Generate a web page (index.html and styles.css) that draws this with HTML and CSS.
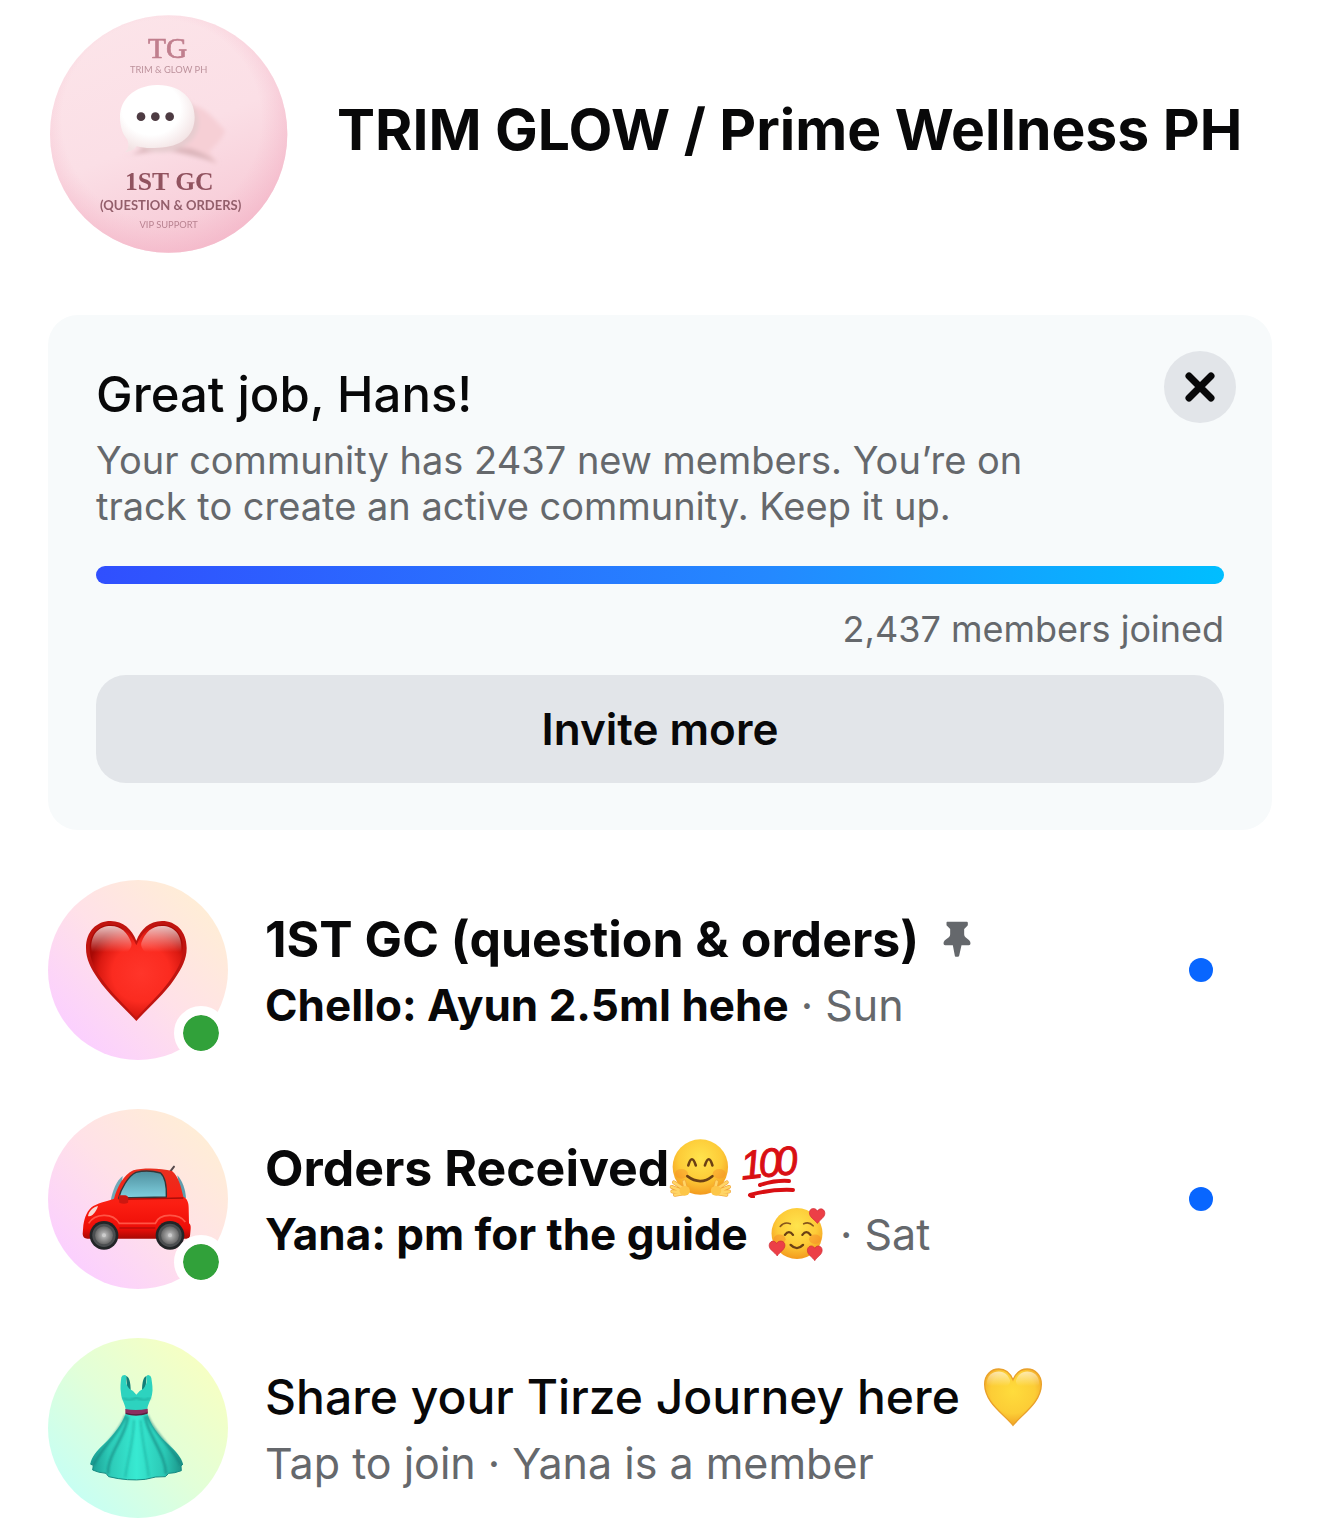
FILE: index.html
```html
<!DOCTYPE html>
<html lang="en">
<head>
    <meta charset="UTF-8">
    <meta name="viewport" content="width=device-width, initial-scale=1.0">
    <title>TRIM GLOW / Prime Wellness PH</title>
    <link rel="stylesheet" href="styles.css">
</head>
<body>
    <header class="header">
        <svg class="logo" viewBox="24 27 720 720" role="img" aria-label="TG 1ST GC">
            <defs>
                <linearGradient id="logoBg" x1="0.3" y1="0" x2="0.7" y2="1">
                    <stop offset="0" stop-color="#fce4e9"/>
                    <stop offset="0.5" stop-color="#fbdfe6"/>
                    <stop offset="1" stop-color="#f6c6d3"/>
                </linearGradient>
                <radialGradient id="logoEdge" cx="0.47" cy="0.44" r="0.56">
                    <stop offset="0.75" stop-color="#f5b9ca" stop-opacity="0"/>
                    <stop offset="1" stop-color="#f3b3c6" stop-opacity="0.6"/>
                </radialGradient>
                <radialGradient id="bubble" cx="0.42" cy="0.35" r="0.65">
                    <stop offset="0.6" stop-color="#ffffff"/>
                    <stop offset="1" stop-color="#f3e3e4"/>
                </radialGradient>
                <filter id="soft" x="-20%" y="-20%" width="140%" height="140%">
                    <feGaussianBlur stdDeviation="6"/>
                </filter>
                <filter id="slight" x="-10%" y="-10%" width="120%" height="120%">
                    <feGaussianBlur stdDeviation="2"/>
                </filter>
            </defs>
            <circle cx="386" cy="387" r="356" fill="url(#logoBg)"/>
            <circle cx="386" cy="387" r="356" fill="url(#logoEdge)"/>
            <g filter="url(#soft)">
                <path d="M460 300 C510 315 535 360 556 376 C545 410 520 425 508 440 L532 478 C500 470 480 450 455 446 C430 450 400 440 380 420Z" fill="#f6cfd5"/>
                <path d="M253 454 C280 450 300 435 315 425 L450 430 C480 440 505 450 532 474 C500 462 440 448 400 440 C350 436 290 446 253 454Z" fill="#dcb6bb"/>
                <ellipse cx="364" cy="352" rx="112" ry="90" fill="#e6cccf"/>
            </g>
            <g filter="url(#slight)">
                <path d="M350 240 C420 238 464 280 464 336 C464 396 420 426 355 428 C335 430 310 430 290 424 C280 436 270 440 254 442 C266 432 268 424 262 404 C246 386 240 362 240 336 C240 282 284 242 350 240Z" fill="url(#bubble)"/>
                <circle cx="303" cy="335" r="13" fill="#4d3b42"/>
                <circle cx="346" cy="335" r="13" fill="#4d3b42"/>
                <circle cx="389" cy="335" r="13" fill="#4d3b42"/>
                <text class="logo-serif" x="383" y="158" font-size="88" fill="#c07f8e" stroke="#c07f8e" stroke-width="2">TG</text>
                <text class="logo-sans" x="386" y="204" font-size="28" fill="#bd929c">TRIM &amp; GLOW PH</text>
                <text class="logo-serif logo-bold" x="388" y="556" font-size="77" fill="#91525f">1ST GC</text>
                <text class="logo-sans logo-bold" x="392" y="616" font-size="39" fill="#935e6b">(QUESTION &amp; ORDERS)</text>
                <text class="logo-sans" x="386" y="669" font-size="28" fill="#b98391">VIP SUPPORT</text>
            </g>
        </svg>
        <h1>TRIM GLOW / Prime Wellness PH</h1>
    </header>

    <main>
        <section class="card">
            <button class="close" type="button" aria-label="Close">
                <svg viewBox="0 0 72 72"><path d="M25 25 L47 47 M47 25 L25 47" stroke="#080809" stroke-width="7" stroke-linecap="round"/></svg>
            </button>
            <h2>Great job, Hans!</h2>
            <p class="card-text">Your community has 2437 new members. You’re on track to create an active community. Keep it up.</p>
            <div class="progress"></div>
            <p class="joined">2,437 members joined</p>
            <button class="invite" type="button">Invite more</button>
        </section>

        <ul class="chats">
            <li class="chat unread">
                <div class="avatar pink">
                    <svg viewBox="24 30 540 540">
                        <defs>
                            <radialGradient id="heartFill" cx="0.55" cy="0.52" r="0.56">
                                <stop offset="0" stop-color="#ff352a"/>
                                <stop offset="0.55" stop-color="#fb2b20"/>
                                <stop offset="0.8" stop-color="#dc1a12"/>
                                <stop offset="1" stop-color="#a80905"/>
                            </radialGradient>
                            <linearGradient id="shine" x1="0" y1="0" x2="0" y2="1">
                                <stop offset="0" stop-color="#fff" stop-opacity="0.75"/>
                                <stop offset="0.8" stop-color="#fff" stop-opacity="0"/>
                            </linearGradient>
                        </defs>
                        <path d="M289 453 C250 410 206 374 174 326 C152 294 138 268 138 234 C138 184 170 153 212 153 C250 153 275 178 289 212 C303 178 328 153 366 153 C408 153 440 184 440 234 C440 268 426 294 404 326 C372 374 328 410 289 453Z" fill="#c01510"/>
                        <path d="M289 444 C252 402 212 368 182 322 C162 292 149 266 149 234 C149 190 176 164 212 164 C250 164 274 190 289 226 C304 190 328 164 366 164 C402 164 429 190 429 234 C429 266 416 292 396 322 C366 368 326 402 289 444Z" fill="url(#heartFill)"/>
                        <path d="M154 236 C152 192 178 168 212 168 C244 168 262 188 274 218 C284 262 156 290 154 236Z" fill="url(#shine)"/>
                        <path d="M424 236 C426 192 400 168 366 168 C334 168 316 188 304 218 C294 262 422 290 424 236Z" fill="url(#shine)"/>
                    </svg>
                    <span class="online"></span>
                </div>
                <div class="info">
                    <h3>1ST GC (question &amp; orders)
                        <svg class="pin" viewBox="83 64 83 108" role="img" aria-label="Pinned"><path d="M95 66 H154 Q157 66 157 70 V75 Q157 77 155 79 L146 88 V104 Q146 110 150 113 L161 122 Q165 126 165 131 Q165 137 160 137 H138 L131 168 Q130 171 127 171 H121 Q118 171 118 168 L112 137 H89 Q84 137 84 131 Q84 126 88 122 L100 113 Q104 110 104 104 V88 L95 79 Q93 77 93 75 V69 Q93 66 95 66Z" fill="#65686c"/></svg>
                    </h3>
                    <p><b>Chello: Ayun 2.5ml hehe</b> · Sun</p>
                </div>
                <span class="dot"></span>
            </li>

            <li class="chat unread">
                <div class="avatar pink">
                    <svg viewBox="24 27 540 540">
                        <defs>
                            <linearGradient id="carBody" x1="0" y1="0" x2="0" y2="1">
                                <stop offset="0" stop-color="#e8301f"/>
                                <stop offset="0.5" stop-color="#fb1e12"/>
                                <stop offset="0.85" stop-color="#ee0e08"/>
                                <stop offset="1" stop-color="#a80804"/>
                            </linearGradient>
                            <linearGradient id="glass" x1="0" y1="0" x2="0" y2="1">
                                <stop offset="0" stop-color="#4f909f"/>
                                <stop offset="1" stop-color="#80d0df"/>
                            </linearGradient>
                            <radialGradient id="hub">
                                <stop offset="0" stop-color="#c6c6c6"/>
                                <stop offset="0.6" stop-color="#8c8c8c"/>
                                <stop offset="1" stop-color="#666"/>
                            </radialGradient>
                        </defs>
                        <path d="M391 214 L402 200" stroke="#55494b" stroke-width="6" stroke-linecap="round"/>
                        <path d="M212 302 C218 270 230 242 248 228 L240 290Z" fill="#6fa9b8"/>
                        <path d="M412 226 C428 244 436 268 438 294 L424 296Z" fill="#5f9dac"/>
                        <path d="M130 376 C134 350 142 330 160 318 C182 306 206 302 222 296 C232 262 250 224 280 211 C306 203 362 203 396 213 C416 228 424 264 430 290 C442 296 446 308 446 324 L447 370 Q453 374 452 386 L450 408 Q448 416 438 416 H142 Q129 416 128 402Z" fill="url(#carBody)"/>
                        <path d="M236 294 C242 268 264 228 288 217 C308 212 340 213 362 219 C376 232 380 262 379 291Z" fill="url(#glass)" stroke="#343739" stroke-width="4"/>
                        <path d="M236 298 L430 294" stroke="#a80e09" stroke-width="4"/>
                        <path d="M236 286 H256 Q266 288 265 298 L264 308 Q252 314 238 308Z" fill="#cd1710"/>
                        <path d="M174 318 C160 320 146 334 144 348 C154 352 168 338 174 318Z" fill="#f7d8d4"/>
                        <path d="M146 370 C164 340 218 336 238 370 H346 C358 338 418 340 436 366" fill="none" stroke="#ff5546" stroke-width="5"/>
                        <path d="M238 384 H346" stroke="#b90c08" stroke-width="4"/>
                        <circle cx="192" cy="406" r="43" fill="#222527"/>
                        <circle cx="192" cy="406" r="35" fill="#4b4e50"/>
                        <circle cx="192" cy="406" r="27" fill="url(#hub)"/>
                        <circle cx="192" cy="406" r="6" fill="#ccc"/>
                        <circle cx="390" cy="406" r="43" fill="#222527"/>
                        <circle cx="390" cy="406" r="35" fill="#4b4e50"/>
                        <circle cx="390" cy="406" r="27" fill="url(#hub)"/>
                        <circle cx="390" cy="406" r="6" fill="#ccc"/>
                    </svg>
                    <span class="online"></span>
                </div>
                <div class="info">
                    <h3>Orders Received<svg class="emoji hug" viewBox="30 22 192 184" role="img" aria-label="hugging face">
                            <defs>
                                <radialGradient id="face" cx="0.5" cy="0.35" r="0.65">
                                    <stop offset="0" stop-color="#ffe44d"/>
                                    <stop offset="0.6" stop-color="#fdcb38"/>
                                    <stop offset="1" stop-color="#f39a1e"/>
                                </radialGradient>
                            </defs>
                            <circle cx="124" cy="111" r="85" fill="url(#face)"/>
                            <ellipse cx="66" cy="132" rx="20" ry="15" fill="#f58a28" opacity="0.4"/>
                            <ellipse cx="182" cy="132" rx="20" ry="15" fill="#f58a28" opacity="0.4"/>
                            <path d="M87 106 Q98 68 110 106 M138 106 Q150 68 161 106" fill="none" stroke="#6b4014" stroke-width="8" stroke-linecap="round"/>
                            <path d="M84 139 Q124 169 161 139" fill="none" stroke="#6b4014" stroke-width="8" stroke-linecap="round"/>
                            <g fill="none" stroke-linecap="round">
                                <path d="M70 176 L43 158 M66 184 L36 172 M68 188 L38 186 M74 192 L46 196 M80 182 L74 156 M178 176 L205 158 M182 184 L212 172 M180 188 L212 186 M174 192 L204 196 M168 182 L174 156" stroke="#f0a63a" stroke-width="12"/>
                                <path d="M70 176 L43 158 M66 184 L36 172 M68 188 L38 186 M74 192 L46 196 M80 182 L74 156 M178 176 L205 158 M182 184 L212 172 M180 188 L212 186 M174 192 L204 196 M168 182 L174 156" stroke="#ffd566" stroke-width="8"/>
                            </g>
                            <ellipse cx="76" cy="184" rx="16" ry="15" fill="#fdc648"/>
                            <ellipse cx="172" cy="184" rx="16" ry="15" fill="#fdc648"/>
                        </svg><svg class="emoji hundred" viewBox="0 0 64 60" role="img" aria-label="100">
                            <text class="hundred-text" transform="translate(5 41) rotate(-6)"><tspan x="-4">1</tspan><tspan x="14">0</tspan><tspan x="31">0</tspan></text>
                            <path d="M19 47 Q34 42 48 43 M9 57 Q30 51 52 52 M9 57 L12 59" fill="none" stroke="#d90f13" stroke-width="4" stroke-linecap="round"/>
                        </svg></h3>
                    <p><b>Yana: pm for the guide</b> <svg class="emoji love" viewBox="328 234 172 164" role="img" aria-label="smiling face with hearts">
                            <circle cx="414" cy="313" r="76" fill="url(#face)"/>
                            <ellipse cx="362" cy="330" rx="18" ry="14" fill="#f58a28" opacity="0.5"/>
                            <ellipse cx="468" cy="330" rx="18" ry="14" fill="#f58a28" opacity="0.5"/>
                            <path d="M364 292 Q376 277 394 284 M434 284 Q450 277 462 290" fill="none" stroke="#86551b" stroke-width="5" stroke-linecap="round"/>
                            <path d="M378 317 Q390 301 402 317 M430 317 Q442 301 454 317" fill="none" stroke="#6b4014" stroke-width="7" stroke-linecap="round"/>
                            <path d="M395 347 Q414 366 432 347" fill="none" stroke="#6b4014" stroke-width="7" stroke-linecap="round"/>
                            <g fill="#ec3f47" stroke="#cf2a35" stroke-width="2">
                                <path d="M475 283 C465 270 451 265 451 251 C451 237 468 234 475 246 C482 234 498 240 497 254 C496 266 482 272 475 283Z"/>
                                <path d="M355 380 C347 368 331 362 331 349 C331 336 346 330 353 343 C360 331 378 334 378 348 C378 362 362 368 355 380Z"/>
                                <path d="M467 394 C459 382 445 377 445 363 C445 350 460 345 467 357 C474 345 490 350 489 364 C488 378 474 382 467 394Z"/>
                            </g>
                        </svg> · Sat</p>
                </div>
                <span class="dot"></span>
            </li>

            <li class="chat">
                <div class="avatar green">
                    <svg viewBox="24 24 540 540">
                        <defs>
                            <linearGradient id="skirt" x1="0" y1="0" x2="1" y2="0">
                                <stop offset="0" stop-color="#1a9c92"/>
                                <stop offset="0.2" stop-color="#2cc9b6"/>
                                <stop offset="0.5" stop-color="#38ead2"/>
                                <stop offset="0.8" stop-color="#2bc8b5"/>
                                <stop offset="1" stop-color="#1a9186"/>
                            </linearGradient>
                            <filter id="fold"><feGaussianBlur stdDeviation="3"/></filter>
                        </defs>
                        <path d="M258 138 Q272 140 272 184 L262 180Z M320 138 Q306 140 306 184 L316 180Z" fill="#137e78"/>
                        <path d="M244 142 Q246 135 254 135 Q260 135 259 142 C256 156 260 168 268 176 Q282 182 289 194 Q296 182 310 176 C318 168 322 156 319 142 Q319 135 325 135 Q333 136 334 144 C336 160 340 178 336 194 C332 212 322 224 322 240 H257 C256 222 244 210 243 190 C240 172 242 158 244 142Z" fill="#2dd3bf"/>
                        <path d="M248 204 Q268 216 289 203 Q312 216 332 204" fill="none" stroke="#1fa598" stroke-width="4" filter="url(#fold)"/>
                        <path d="M257 250 H322 C332 286 354 314 384 342 C408 364 424 382 429 402 L423 408 L424 422 Q404 430 386 430 L376 440 Q348 438 316 448 Q264 454 206 440 L198 430 Q174 428 158 420 L160 406 L151 402 C154 382 170 362 192 342 C222 314 246 284 257 250Z" fill="url(#skirt)"/>
                        <path d="M257 256 C246 300 186 350 160 406 M264 260 C258 320 202 370 204 432 M314 258 C326 320 376 370 378 432 M322 256 C334 300 396 350 422 404" fill="none" stroke="#147e79" stroke-width="7" opacity="0.65" filter="url(#fold)"/>
                        <path d="M282 270 C280 340 262 390 256 442 M302 270 C306 340 322 390 326 440" fill="none" stroke="#1ba99a" stroke-width="6" opacity="0.6" filter="url(#fold)"/>
                        <path d="M151 402 L160 406 L158 420 Q174 428 198 430 L206 440 Q264 454 316 448 Q348 438 376 440 L386 430 Q404 430 424 422 L423 408 L429 402" fill="none" stroke="#178a82" stroke-width="3"/>
                        <path d="M256 237 Q289 244 323 236 L324 250 Q289 262 256 251Z" fill="#8c2f60"/>
                        <path d="M258 250 Q289 260 322 249" fill="none" stroke="#55233f" stroke-width="4"/>
                    </svg>
                </div>
                <div class="info">
                    <h3>Share your Tirze Journey here <svg class="emoji heart" viewBox="38 36 182 182" role="img" aria-label="yellow heart">
                            <defs>
                                <radialGradient id="gold" cx="0.5" cy="0.4" r="0.65">
                                    <stop offset="0" stop-color="#ffdc3c"/>
                                    <stop offset="0.6" stop-color="#fccd36"/>
                                    <stop offset="1" stop-color="#ee9a22"/>
                                </radialGradient>
                            </defs>
                            <path d="M129 213 C108 188 80 168 62 142 C50 124 43 108 43 88 C43 60 62 42 86 42 C107 42 121 56 129 75 C137 56 151 42 172 42 C196 42 215 60 215 88 C215 108 208 124 196 142 C178 168 150 188 129 213Z" fill="url(#gold)" stroke="#e9a02a" stroke-width="4"/>
                            <path d="M50 86 C50 62 66 50 86 50 C104 50 114 62 120 76 C124 104 54 118 50 86Z" fill="url(#shine)" opacity="0.8"/>
                            <path d="M208 86 C208 62 192 50 172 50 C154 50 144 62 138 76 C134 104 204 118 208 86Z" fill="url(#shine)" opacity="0.8"/>
                        </svg></h3>
                    <p>Tap to join · Yana is a member</p>
                </div>
            </li>
        </ul>
    </main>
</body>
</html>
```
FILE: styles.css
```css
body {
    margin: 0;
    padding: 14px 48px 20px;
    font-family: Inter, "Liberation Sans", sans-serif;
    color: #080809;
    background-color: #fff;
}
h1, h2, h3, p, ul {
    margin: 0;
    padding: 0;
}
button {
    border: none;
    font-family: inherit;
    color: inherit;
    background-color: #e2e5e9;
    cursor: pointer;
}
.header {
    display: flex;
    align-items: center;
    gap: 49px;
    margin-bottom: 61px;
}
.header h1 {
    font-size: 57px;
    line-height: 72px;
    font-weight: 700;
    padding-bottom: 8px;
}
.logo {
    width: 240px;
    height: 240px;
    flex-shrink: 0;
}
.logo text {
    text-anchor: middle;
}
.logo-serif {
    font-family: "Liberation Serif", serif;
}
.logo-sans {
    font-family: Lato, sans-serif;
}
.logo-bold {
    font-weight: 700;
}

/* Community progress card */
.card {
    position: relative;
    padding: 48px 48px 47px;
    border-radius: 30px;
    background-color: #f7fafb;
}
.card h2 {
    font-size: 49px;
    line-height: 64px;
    font-weight: 500;
}
.card-text {
    max-width: 960px;
    margin-top: 10px;
    font-size: 38px;
    line-height: 46px;
    color: #65686c;
}
.close {
    position: absolute;
    top: 36px;
    right: 36px;
    width: 72px;
    height: 72px;
    padding: 0;
    border-radius: 50%;
}
.close svg {
    display: block;
}
.progress {
    height: 18px;
    margin-top: 37px;
    border-radius: 9px;
    background: linear-gradient(to right, #304ffe, #2489ff 60%, #00beff);
}
.joined {
    margin: 22px 0;
    font-size: 36px;
    line-height: 47px;
    text-align: right;
    color: #65686c;
}
.invite {
    display: block;
    width: 100%;
    height: 108px;
    border-radius: 30px;
    font-size: 44px;
    font-weight: 600;
}

/* Chat list */
.chats {
    display: flex;
    flex-direction: column;
    gap: 49px;
    margin-top: 50px;
    list-style: none;
}
.chat {
    display: flex;
    align-items: center;
    gap: 37px;
    padding-right: 59px;
}
.avatar {
    position: relative;
    flex-shrink: 0;
    width: 180px;
    height: 180px;
    border-radius: 50%;
}
.avatar svg {
    display: block;
}
.pink {
    background: linear-gradient(45deg, #fbd0fe 15%, #ffe1e8 50%, #fff0d2 95%);
}
.green {
    background: linear-gradient(45deg, #c8fff2 15%, #e2ffd8 50%, #fbffbe 95%);
}
.online {
    position: absolute;
    right: 0;
    bottom: 0;
    width: 36px;
    height: 36px;
    border: 9px solid #fff;
    border-radius: 50%;
    background-color: #31a13a;
    background-clip: padding-box;
}
.info {
    flex: 1;
    padding-top: 4px;
}
.info h3 {
    font-size: 48px;
    line-height: 66px;
    font-weight: 500;
}
.info p {
    font-size: 43px;
    line-height: 66px;
    color: #65686c;
}
.info b {
    font-size: 44px;
    font-weight: 700;
    color: #080809;
}
.unread h3 {
    font-size: 50px;
    font-weight: 700;
}
.pin {
    width: 28px;
    height: 36px;
    margin-left: 12px;
}
.emoji {
    width: 64px;
    height: 60px;
    vertical-align: middle;
    margin-top: -12px;
    margin-bottom: -4px;
}
.hundred {
    margin-left: 8px;
}
.heart {
    margin-left: 8px;
}
.love {
    width: 58px;
    height: 55px;
    margin: -12px 2px -4px 8px;
}
.hundred-text {
    font-family: "Liberation Sans", sans-serif;
    font-size: 40px;
    font-style: italic;
    font-weight: 400;
    fill: #d90f13;
    stroke: #d90f13;
}
.dot {
    width: 24px;
    height: 24px;
    border-radius: 50%;
    background-color: #0866ff;
}
```
